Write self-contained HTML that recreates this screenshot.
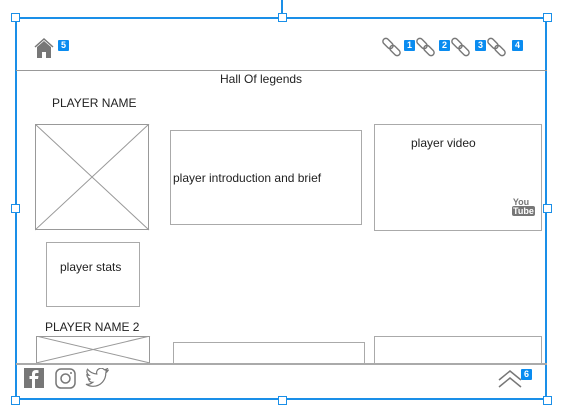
<!DOCTYPE html>
<html><head><style>
body{margin:0;width:574px;height:418px;background:#fff;position:relative;overflow:hidden;font-family:"Liberation Sans",sans-serif;color:#222}
.a{position:absolute}
.box{position:absolute;border:1px solid #aaa;box-sizing:border-box}
.h{position:absolute;width:9px;height:9px;border:1px solid #1a8fe8;background:#fff;box-sizing:border-box}
.b{position:absolute;background:#0a8cf0;color:#fff;font-size:9px;font-weight:bold;width:11px;height:11px;line-height:11px;text-align:center;border-radius:1px}
.t{position:absolute;font-size:12px;white-space:nowrap}
</style></head><body>
<div class="a" style="left:281px;top:0;width:2px;height:18px;background:#1a8fe8"></div>
<div class="a" style="left:15px;top:17px;width:532px;height:383px;border:2px solid #1a8fe8;box-sizing:border-box"></div>
<div class="a" style="left:16px;top:70px;width:531px;height:1px;background:#999"></div>
<svg class="a" style="left:34px;top:37px" width="20" height="22" viewBox="0 0 20 22"><path d="M1 10 L10 2 L19 10" fill="none" stroke="#777" stroke-width="1.5"/><path d="M3 10 L10 4 L17 10 V21 H12 V15 H8 V21 H3Z" fill="#777"/></svg>
<div class="b" style="left:58px;top:40px">5</div>
<svg class="a" style="left:382px;top:37px" width="22" height="22"><g fill="none" stroke="#777" stroke-width="1.4"><rect x="3" y="0.5" width="6" height="12" rx="3" transform="rotate(-45 6 6.5)"/><rect x="10" y="7.5" width="6" height="12" rx="3" transform="rotate(-45 13 13.5)"/></g></svg>
<div class="b" style="left:404px;top:40px">1</div>
<svg class="a" style="left:416px;top:37px" width="22" height="22"><g fill="none" stroke="#777" stroke-width="1.4"><rect x="3" y="0.5" width="6" height="12" rx="3" transform="rotate(-45 6 6.5)"/><rect x="10" y="7.5" width="6" height="12" rx="3" transform="rotate(-45 13 13.5)"/></g></svg>
<div class="b" style="left:439px;top:40px">2</div>
<svg class="a" style="left:451px;top:37px" width="22" height="22"><g fill="none" stroke="#777" stroke-width="1.4"><rect x="3" y="0.5" width="6" height="12" rx="3" transform="rotate(-45 6 6.5)"/><rect x="10" y="7.5" width="6" height="12" rx="3" transform="rotate(-45 13 13.5)"/></g></svg>
<div class="b" style="left:475px;top:40px">3</div>
<svg class="a" style="left:487px;top:37px" width="22" height="22"><g fill="none" stroke="#777" stroke-width="1.4"><rect x="3" y="0.5" width="6" height="12" rx="3" transform="rotate(-45 6 6.5)"/><rect x="10" y="7.5" width="6" height="12" rx="3" transform="rotate(-45 13 13.5)"/></g></svg>
<div class="b" style="left:512px;top:40px">4</div>
<div class="t" style="left:220px;top:72px">Hall Of legends</div>
<div class="t" style="left:52px;top:96px">PLAYER NAME</div>
<svg class="a" style="left:35px;top:124px" width="115" height="107"><rect x="0.5" y="0.5" width="113" height="105" fill="none" stroke="#999"/><path d="M0 0L114 106M114 0L0 106" stroke="#999"/></svg>
<div class="box" style="left:170px;top:130px;width:192px;height:95px"></div>
<div class="t" style="left:173px;top:171px">player introduction and brief</div>
<div class="box" style="left:374px;top:124px;width:168px;height:107px"></div>
<div class="t" style="left:411px;top:136px">player video</div>
<div class="a" style="left:512px;top:198px;font-size:9px;font-weight:bold;color:#777;line-height:9px;text-align:center;width:18px">You<br><span style="background:#777;color:#fff;border-radius:2px;padding:0 1px">Tube</span></div>
<div class="box" style="left:46px;top:242px;width:94px;height:65px"></div>
<div class="t" style="left:60px;top:260px">player stats</div>
<div class="t" style="left:45px;top:320px">PLAYER NAME 2</div>
<svg class="a" style="left:36px;top:336px" width="115" height="28"><rect x="0.5" y="0.5" width="113" height="40" fill="none" stroke="#999"/><path d="M0 0L114 27M114 0L0 27" stroke="#999"/></svg>
<div class="box" style="left:173px;top:342px;width:192px;height:22px;border-bottom:none"></div>
<div class="box" style="left:374px;top:336px;width:168px;height:28px;border-bottom:none"></div>
<div class="a" style="left:16px;top:363px;width:531px;height:2px;background:#aaa"></div>
<svg class="a" style="left:24px;top:368px" width="20" height="20"><rect width="20" height="20" fill="#777"/><path d="M11 20V11H14L14.5 8H11V6.5C11 5.5 11.5 5 12.5 5H14.5V2.3C14 2.2 13 2 12 2C9.5 2 8 3.5 8 6V8H5.5V11H8V20Z" fill="#fff"/></svg>
<svg class="a" style="left:55px;top:368px" width="21" height="21"><rect x="1" y="1" width="19" height="19" rx="5" fill="none" stroke="#777" stroke-width="1.5"/><circle cx="10.5" cy="10.5" r="4.5" fill="none" stroke="#777" stroke-width="1.5"/><circle cx="16" cy="5" r="1" fill="#777"/></svg>
<svg class="a" style="left:85px;top:368px" width="24" height="20" viewBox="0 0 24 20"><path d="M23 2.5c-.8.4-1.7.6-2.6.7.9-.6 1.6-1.4 2-2.5-.9.5-1.9.9-2.9 1.1A4.5 4.5 0 0 0 11.8 6C8 5.8 4.7 4 2.5 1.3c-1.2 2-.6 4.6 1.4 6-.7 0-1.4-.2-2-.6 0 2.2 1.5 4.1 3.6 4.5-.7.2-1.4.2-2 .1.6 1.8 2.3 3.1 4.2 3.1A9 9 0 0 1 1 16.3 12.8 12.8 0 0 0 7.9 18.3c8.3 0 12.9-6.9 12.9-12.9v-.6C21.7 4.2 22.4 3.4 23 2.5Z" fill="none" stroke="#777" stroke-width="1.2"/></svg>
<svg class="a" style="left:497px;top:368px" width="26" height="20"><path d="M2 12L13 3L24 12M2 19L13 10L24 19" fill="none" stroke="#777" stroke-width="1.5"/></svg>
<div class="b" style="left:521px;top:369px">6</div>
<div class="h" style="left:11px;top:13px"></div>
<div class="h" style="left:278px;top:13px"></div>
<div class="h" style="left:543px;top:13px"></div>
<div class="h" style="left:11px;top:204px"></div>
<div class="h" style="left:543px;top:204px"></div>
<div class="h" style="left:11px;top:396px"></div>
<div class="h" style="left:278px;top:396px"></div>
<div class="h" style="left:543px;top:396px"></div>
</body></html>
